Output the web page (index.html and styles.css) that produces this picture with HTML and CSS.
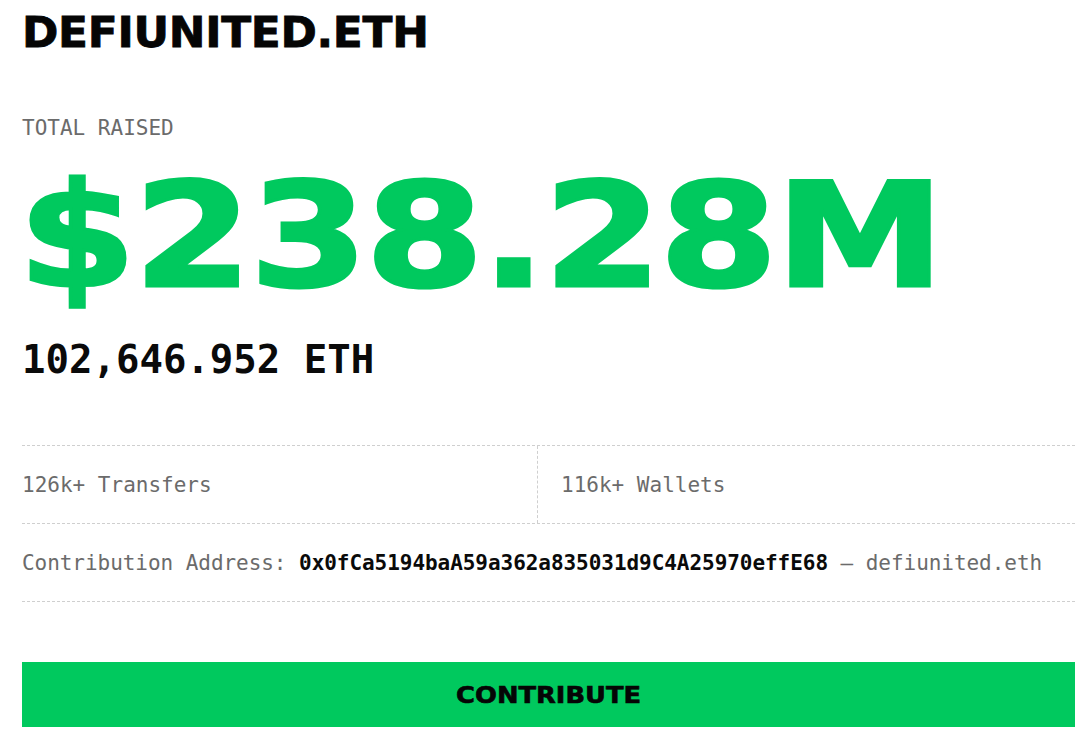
FILE: index.html
```html
<!DOCTYPE html>
<html lang="en">
<head>
<meta charset="utf-8">
<title>DEFIUNITED.ETH</title>
<link rel="stylesheet" href="styles.css">
</head>
<body>
<main class="page">
  <h1 class="title"><span class="title-text">DEFIUNITED.ETH</span></h1>
  <div class="label">TOTAL RAISED</div>
  <div class="amount"><span class="amount-text">$238.28M</span></div>
  <div class="eth">102,646.952 ETH</div>
  <div class="stats">
    <div class="stat">126k+ Transfers</div>
    <div class="stat stat-right">116k+ Wallets</div>
  </div>
  <div class="address">Contribution Address: <span class="addr">0x0fCa5194baA59a362a835031d9C4A25970effE68</span> — defiunited.eth</div>
  <button class="contribute"><span class="contribute-text">CONTRIBUTE</span></button>
</main>
</body>
</html>
```
FILE: styles.css
```css
html, body {
  margin: 0;
  padding: 0;
  background: #ffffff;
}
.page {
  padding: 11px 12px 0 22px;
  font-family: "DejaVu Sans Mono", "Liberation Mono", monospace;
  color: #000;
}
.title {
  margin: 0;
  font-family: "DejaVu Sans", "Liberation Sans", sans-serif;
  font-weight: 700;
  font-size: 43px;
  line-height: 1;
  color: #050505;
}
.title-text {
  display: inline-block;
  transform: scaleX(1.02);
  transform-origin: left center;
  -webkit-text-stroke: 0.8px #050505;
  letter-spacing: -0.3px;
}
.label {
  margin-top: 64px;
  font-size: 21px;
  line-height: 1;
  color: #6b6b6b;
}
.amount {
  margin-top: 25px;
  height: 144px;
  font-family: "DejaVu Sans", "Liberation Sans", sans-serif;
  font-weight: 700;
  font-size: 144px;
  line-height: 1;
  color: #00c95e;
  white-space: nowrap;
}
.amount-text {
  display: inline-block;
  margin-left: -4px;
  transform: scaleX(1.18);
  transform-origin: left center;
  letter-spacing: -2px;
  -webkit-text-stroke: 3px #00c95e;
}
.eth {
  margin-top: 32px;
  font-size: 39px;
  line-height: 1;
  font-weight: 700;
  color: #0a0a0a;
}
.stats {
  margin-top: 66px;
  display: grid;
  grid-template-columns: 515px 1fr;
  border-top: 1px dashed #cfcfcf;
  border-bottom: 1px dashed #cfcfcf;
}
.stat {
  height: 77px;
  display: flex;
  align-items: center;
  font-size: 21px;
  color: #6b6b6b;
}
.stat-right {
  border-left: 1px dashed #cfcfcf;
  padding-left: 23px;
}
.address {
  height: 77px;
  display: flex;
  align-items: center;
  font-size: 21px;
  letter-spacing: -0.05px;
  color: #6b6b6b;
  white-space: pre;
  border-bottom: 1px dashed #cfcfcf;
}
.addr {
  color: #0a0a0a;
  font-weight: 700;
}
.contribute {
  display: flex;
  align-items: center;
  justify-content: center;
  width: 100%;
  height: 65px;
  margin-top: 60px;
  border: none;
  padding: 0;
  background: #00c95e;
  font-family: "DejaVu Sans", "Liberation Sans", sans-serif;
  font-weight: 700;
  font-size: 23px;
  color: #050505;
  cursor: pointer;
}
.contribute-text {
  display: inline-block;
  transform: scaleX(1.12);
  -webkit-text-stroke: 0.6px #050505;
}
```
